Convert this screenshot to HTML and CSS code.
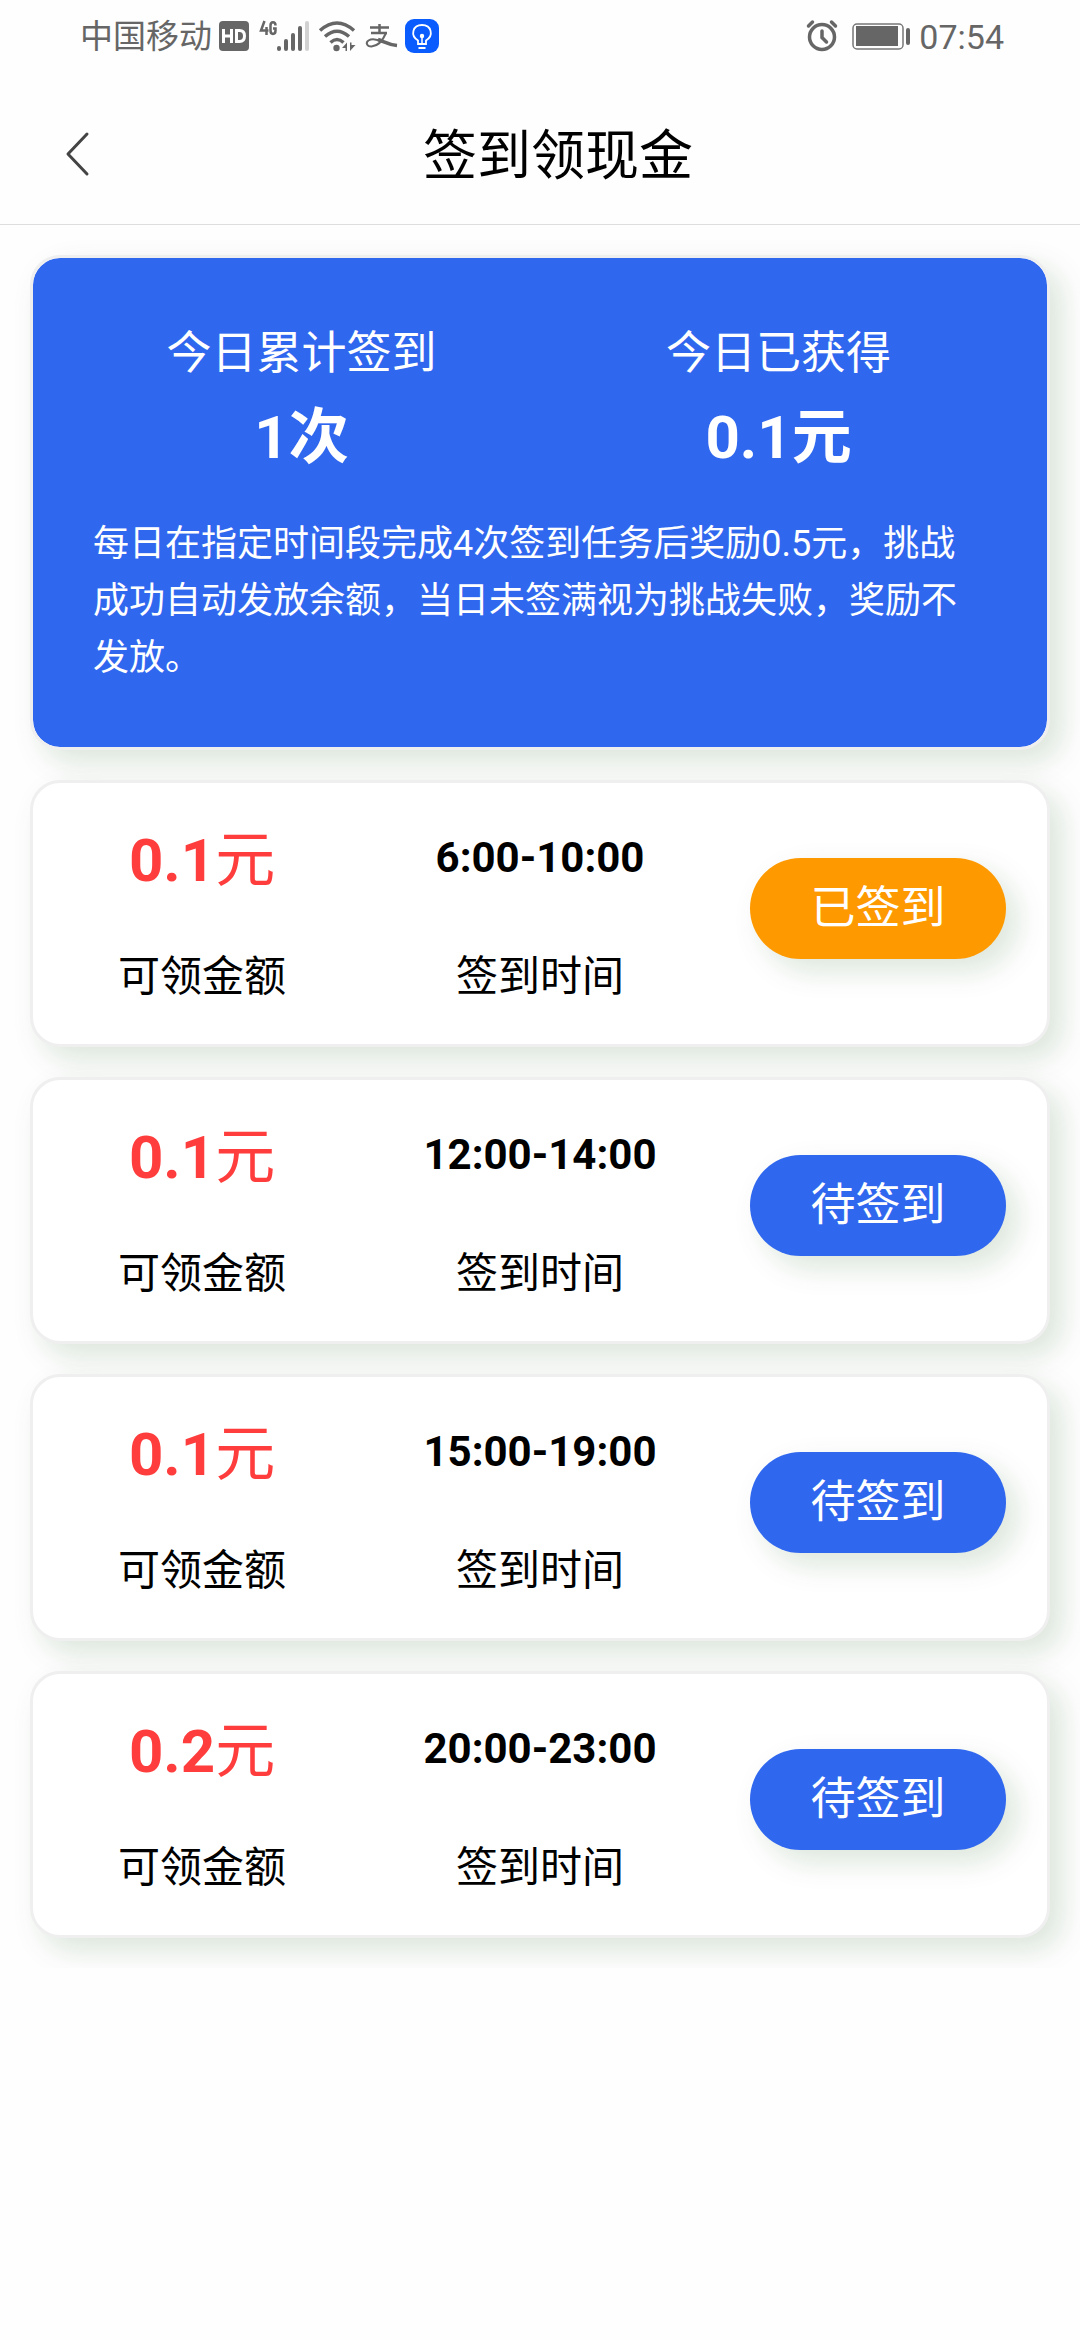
FILE: index.html
```html
<!DOCTYPE html>
<html lang="zh-CN">
<head>
<meta charset="utf-8">
<meta name="viewport" content="width=device-width, initial-scale=1">
<title>签到领现金</title>
<link rel="stylesheet" href="styles.css">
</head>
<body>
<div class="status-bar">
  <div class="status-group">
    <span class="carrier">中国移动</span>
    <svg class="status-icons" width="228" height="50" viewBox="216 12 228 50" aria-hidden="true">
      <rect x="219" y="21" width="30" height="30" rx="4" fill="#666"/>
      <path d="M223.500 29v14M231.500 29v14M223.500 36h8" stroke="#fff" stroke-width="3" fill="none"/>
      <path d="M236.500 30.500v11h3c4 0 5-2 5-5.500s-1-5.500-5-5.500z" stroke="#fff" stroke-width="3" fill="none"/>
      <path d="M264.500 21l-3.500 9.500h7.500M266.500 27v8M275.500 25.500c0-4.500-5-4.500-5 0v5c0 4.500 5 4.500 5 0v-2h-2.500" stroke="#666" stroke-width="2.500" fill="none"/>
      <g fill="#666">
        <rect x="277" y="46" width="4" height="5" rx="2"/>
        <rect x="284" y="39" width="4" height="12" rx="2"/>
        <rect x="291" y="33" width="4" height="18" rx="2"/>
        <rect x="298" y="26" width="4" height="25" rx="2"/>
        <rect x="305" y="21" width="4" height="30" rx="2" fill="#d2d2d2"/>
      </g>
      <path d="M320 30.500q17-15 34 0M325 36.500q12-10.500 24 0M330.500 42.500q6.500-6 13 0" stroke="#666" stroke-width="3.500" fill="none"/>
      <circle cx="336.500" cy="48" r="3.200" fill="#666"/>
      <path d="M342 48l5-5.500V51h-1.500v-3zM350 42.500h1.500v2.500h4l-5.500 6z" fill="#666"/>
      <g fill="none" stroke="#666">
        <path d="M370 27.500h19M379.500 24v8M371 33h16" stroke-width="2.500"/>
        <path d="M386 33c-3 7-8 13-14.500 13.500-5 0-6-4-3-6 4-2.500 9-1 14 1.500" stroke-width="2"/>
        <path d="M378 39.500c6 2 10 5 19 6" stroke-width="3.500"/>
      </g>
      <rect x="405" y="19" width="34" height="34" rx="9" fill="#0a5cff"/>
      <path d="M418 44v-3.500c-8-5-5.500-15.500 4-15.500s12 10.500 4 15.500V44zM418.500 48h7" stroke="#fff" stroke-width="1.800" fill="none"/>
      <path d="M422 44v-7" stroke="#fff" stroke-width="1.500"/>
      <circle cx="422" cy="36" r="2.200" fill="#fff"/>
    </svg>
  </div>
  <div class="status-group">
    <svg class="status-icons" width="108" height="50" viewBox="804 12 108 50" aria-hidden="true">
      <g fill="none" stroke="#666" stroke-linecap="round">
        <circle cx="822" cy="37" r="12.500" stroke-width="3.500"/>
        <path d="M822 31v6.500l4.500 4.500" stroke-width="3.500"/>
        <path d="M808.500 26l4-4M835.500 26l-4-4" stroke-width="3.500"/>
      </g>
      <rect x="853" y="24" width="50" height="25" rx="4" fill="none" stroke="#777" stroke-width="1.500"/>
      <rect x="856" y="26" width="42" height="20" fill="#666"/>
      <rect x="906" y="28" width="4" height="17" rx="2" fill="#666"/>
    </svg>
    <time class="clock">07:54</time>
  </div>
</div>
<header class="nav">
  <button class="back" type="button" aria-label="返回">
    <svg width="26" height="46" viewBox="0 0 26 46"><path d="M23 3L4 23l19 20" fill="none" stroke="#444" stroke-width="3" stroke-linecap="round" stroke-linejoin="round"/></svg>
  </button>
  <h1 class="title">签到领现金</h1>
</header>
<main class="page">
  <section class="card summary">
    <div class="stats">
      <div class="stat"><span class="stat-label">今日累计签到</span><strong class="stat-value">1次</strong></div>
      <div class="stat"><span class="stat-label">今日已获得</span><strong class="stat-value">0.1元</strong></div>
    </div>
    <p class="rule">每日在指定时间段完成4次签到任务后奖励0.5元，挑战成功自动发放余额，当日未签满视为挑战失败，奖励不发放。</p>
  </section>
  <section class="card task">
    <div class="cell"><span class="amount"><b>0.1</b>元</span><span class="caption">可领金额</span></div>
    <div class="cell"><b class="period">6:00-10:00</b><span class="caption">签到时间</span></div>
    <div class="action"><button class="sign signed" type="button">已签到</button></div>
  </section>
  <section class="card task">
    <div class="cell"><span class="amount"><b>0.1</b>元</span><span class="caption">可领金额</span></div>
    <div class="cell"><b class="period">12:00-14:00</b><span class="caption">签到时间</span></div>
    <div class="action"><button class="sign" type="button">待签到</button></div>
  </section>
  <section class="card task">
    <div class="cell"><span class="amount"><b>0.1</b>元</span><span class="caption">可领金额</span></div>
    <div class="cell"><b class="period">15:00-19:00</b><span class="caption">签到时间</span></div>
    <div class="action"><button class="sign" type="button">待签到</button></div>
  </section>
  <section class="card task">
    <div class="cell"><span class="amount"><b>0.2</b>元</span><span class="caption">可领金额</span></div>
    <div class="cell"><b class="period">20:00-23:00</b><span class="caption">签到时间</span></div>
    <div class="action"><button class="sign" type="button">待签到</button></div>
  </section>
</main>
</body>
</html>
```

FILE: styles.css
```css
* {
  box-sizing: border-box;
}

body {
  margin: 0;
  background: #fefefe;
  color: #000;
  font-family: Roboto, "Noto Sans CJK SC", sans-serif;
}

.status-bar {
  display: flex;
  justify-content: space-between;
  align-items: center;
  height: 74px;
  padding: 0 76px 0 80px;
  color: #666;
}

.status-group {
  display: flex;
  align-items: center;
}

.status-icons {
  display: block;
}

.carrier {
  margin-right: 4px;
  font-size: 33px;
  line-height: 50px;
}

.clock {
  margin-left: 7px;
  font-size: 34px;
  line-height: 50px;
}

.nav {
  display: flex;
  align-items: center;
  height: 151px;
  padding: 10px 64px 0;
  border-bottom: 1px solid #dedede;
}

.back {
  display: flex;
  padding: 0 10px 0 0;
  border: 0;
  background: none;
}

.title {
  flex: 1;
  margin: 0;
  padding-top: 6px;
  font-size: 54px;
  font-weight: 400;
  line-height: 78px;
  text-align: center;
}

.page {
  display: flex;
  flex-direction: column;
  gap: 30px;
  padding: 30px;
}

.card {
  border: 3px solid #efefef;
  border-radius: 30px;
  background: #fff;
  box-shadow: 12px 12px 30px rgba(0, 80, 0, 0.14);
}

.summary {
  padding: 63px 30px 60px;
  background: #3067ef;
  background-clip: padding-box;
  color: #fff;
}

.stats {
  display: grid;
  grid-template-columns: 1fr 1fr;
}

.stat {
  display: flex;
  flex-direction: column;
  align-items: center;
}

.stat-label {
  font-size: 45px;
  line-height: 66px;
}

.stat-value {
  font-size: 60px;
  line-height: 102px;
}

.rule {
  margin: 27px 30px 0;
  font-size: 36px;
  line-height: 57px;
}

.task {
  display: grid;
  grid-template-columns: repeat(3, 1fr);
  padding: 33px 0;
}

.cell {
  display: flex;
  flex-direction: column;
  align-items: center;
  justify-content: space-between;
  padding-bottom: 4px;
}

.amount {
  color: #ff3d3d;
  font-size: 60px;
  line-height: 90px;
}

.period {
  font-size: 42px;
  line-height: 84px;
}

.caption {
  font-size: 42px;
  line-height: 60px;
}

.action {
  display: flex;
  align-items: center;
  justify-content: center;
  height: 195px;
  padding-bottom: 10px;
}

.sign {
  padding: 0 60px;
  border: 0;
  border-radius: 51px;
  background: #3067ef;
  box-shadow: 12px 12px 30px rgba(0, 80, 0, 0.14);
  color: #fff;
  font-family: inherit;
  font-size: 45px;
  line-height: 101px;
}

.signed {
  background: #ff9900;
}
```
